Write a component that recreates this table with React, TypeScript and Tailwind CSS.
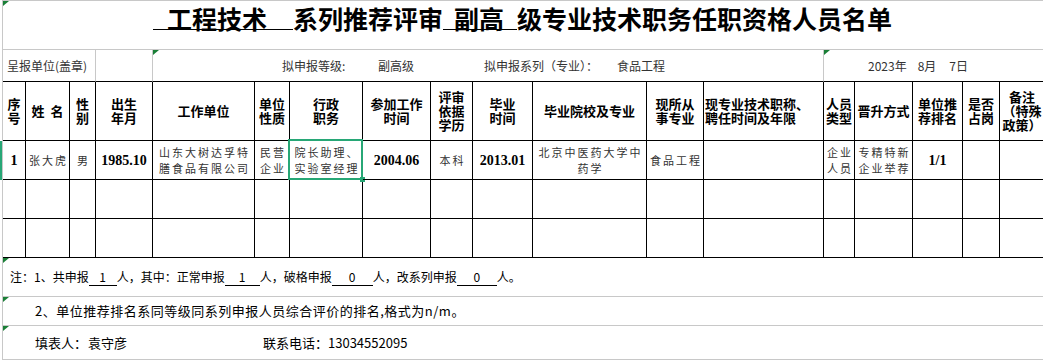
import React from "react";

const heads: string[][] = [
  ["序", "号"],
  ["姓 名"],
  ["性", "别"],
  ["出生", "年月"],
  ["工作单位"],
  ["单位", "性质"],
  ["行政", "职务"],
  ["参加工作", "时间"],
  ["评审", "依据", "学历"],
  ["毕业", "时间"],
  ["毕业院校及专业"],
  ["现所从", "事专业"],
  ["现专业技术职称、", "聘任时间及年限"],
  ["人员", "类型"],
  ["晋升方式"],
  ["单位推", "荐排名"],
  ["是否", "占岗"],
  ["备注", "（特殊", "政策）"],
];

// kind: "num" = bold serif digits, "txt" = body text
const row: { kind: "num" | "txt"; lines: string[] }[] = [
  { kind: "num", lines: ["1"] },
  { kind: "txt", lines: ["张大虎"] },
  { kind: "txt", lines: ["男"] },
  { kind: "num", lines: ["1985.10"] },
  { kind: "txt", lines: ["山东大树达孚特", "膳食品有限公司"] },
  { kind: "txt", lines: ["民营", "企业"] },
  { kind: "txt", lines: ["院长助理、", "实验室经理"] },
  { kind: "num", lines: ["2004.06"] },
  { kind: "txt", lines: ["本科"] },
  { kind: "num", lines: ["2013.01"] },
  { kind: "txt", lines: ["北京中医药大学中", "药学"] },
  { kind: "txt", lines: ["食品工程"] },
  { kind: "txt", lines: [] },
  { kind: "txt", lines: ["企业", "人员"] },
  { kind: "txt", lines: ["专精特新", "企业举荐"] },
  { kind: "num", lines: ["1/1"] },
  { kind: "txt", lines: [] },
  { kind: "txt", lines: [] },
];

function Tri() {
  return (
    <span className="absolute left-0 top-0 h-0 w-0 border-t-[5px] border-r-[6px] border-t-[#1a7f37] border-r-transparent" />
  );
}

function Blank({ w, v }: { w: string; v: string }) {
  return <span className={`inline-block border-b border-black text-center leading-[16px] ${w}`}>{v}</span>;
}

export default function App() {
  return (
    <div className="flex h-[360px] w-[1043px] overflow-hidden bg-white text-black font-['Noto_Sans_CJK_SC',sans-serif]">
      {/* row header gutter */}
      <div className="flex w-[2px] shrink-0 flex-col">
        <div className="h-[141px]" />
        <div className="h-[39px] bg-[#27a776]" />
      </div>

      <div className="grid shrink-0 grid-cols-[23px_44px_26px_57px_102px_35px_73px_68px_42px_60px_114px_57px_120px_31px_58px_50px_37px_61px] content-start border-l border-t border-[#c8c8c8]">
        {/* title */}
        <div className="relative col-[1/-1] h-[49px] whitespace-nowrap border-b border-[#c8c8c8] pl-[150px] pt-[6px] text-[25px] font-bold leading-[22px]">
          <Tri />
          <span className="inline-block border-b border-black pl-[14px] pr-[26px]">工程技术</span>
          <span>系列推荐评审</span>
          <span className="inline-block border-b border-black pl-[11px] pr-[13px]">副高</span>
          <span>级专业技术职务任职资格人员名单</span>
        </div>

        {/* unit / level line */}
        <div className="col-span-3 flex h-[32px] items-center border-b border-r border-b-black border-r-[#c8c8c8] pl-[4px] text-[12px] text-[#333]">
          呈报单位(盖章)
        </div>
        <div className="h-[32px] border-b border-r border-b-black border-r-[#c8c8c8]" />
        <div className="relative col-span-9 flex h-[32px] items-center whitespace-nowrap border-b border-r border-b-black border-r-[#c8c8c8] pl-[129px] text-[12px] text-[#333]">
          <Tri />
          <span className="w-[96px]">拟申报等级:</span>
          <span className="w-[106px]">副高级</span>
          <span className="w-[133px]">拟申报系列（专业）：</span>
          <span>食品工程</span>
        </div>
        <div className="relative col-span-5 flex h-[32px] items-center whitespace-nowrap border-b border-black pl-[44px] text-[12px] text-[#333]">
          <Tri />
          <span>2023年</span>
          <span className="ml-[11px]">8月</span>
          <span className="ml-[13px]">7日</span>
        </div>

        {/* header */}
        {heads.map((h, i) => (
          <div
            key={"h" + i}
            className={`flex h-[59px] flex-col justify-center border-b border-r border-black text-[13px] font-bold leading-[14px] ${
              i === 12 ? "items-start pl-[1px]" : i === 17 ? "items-start" : "items-center text-center"
            }`}
          >
            {i === 1 ? (
              <div className="flex gap-[6px]">
                <span>姓</span>
                <span>名</span>
              </div>
            ) : i === 17 ? (
              <div className="flex w-[44px] flex-col items-center">
                {h.map((l) => (
                  <span key={l}>{l}</span>
                ))}
              </div>
            ) : (
              h.map((l) => (
                <span key={l} className="whitespace-nowrap">
                  {l}
                </span>
              ))
            )}
          </div>
        ))}

        {/* data row */}
        {row.map((c, i) => (
          <div
            key={"d" + i}
            className={`relative flex h-[39px] flex-col items-center justify-center whitespace-nowrap border-b border-r border-black text-center ${
              c.kind === "num"
                ? "font-['Liberation_Serif','Noto_Sans_CJK_SC',serif] text-[14px] font-bold"
                : "pl-[2px] text-[11px] leading-[16px] tracking-[2px] text-[#333]"
            }`}
          >
            {c.lines.map((l) => (
              <span key={l}>{l}</span>
            ))}
            {i === 6 && (
              <>
                <span className="pointer-events-none absolute -bottom-[1px] -left-[2px] -right-[1px] -top-[2px] border-2 border-[#27a776]" />
                <span className="absolute -bottom-[3px] -right-[3px] h-[5px] w-[5px] bg-[#27a776]" />
              </>
            )}
          </div>
        ))}

        {/* empty rows */}
        {Array.from({ length: 36 }).map((_, i) => (
          <div key={"e" + i} className="h-[39px] border-b border-r border-black" />
        ))}

        {/* notes */}
        <div className="relative col-[1/-1] flex h-[39px] items-center whitespace-nowrap border-b border-[#c8c8c8] pl-[7px] text-[12px]">
          <Tri />
          <span>注：1、共申报</span>
          <Blank w="w-[28px]" v="1" />
          <span>人，其中：正常申报</span>
          <Blank w="w-[35px]" v="1" />
          <span>人，破格申报</span>
          <Blank w="w-[41px]" v="0" />
          <span>人，改系列申报</span>
          <Blank w="w-[40px]" v="0" />
          <span>人。</span>
        </div>
        <div className="relative col-[1/-1] flex h-[29px] items-center whitespace-nowrap border-b border-[#c8c8c8] pl-[32px] text-[13px] tracking-[0.5px]">
          <Tri />
          2、单位推荐排名系同等级同系列申报人员综合评价的排名,格式为n/m。
        </div>
        <div className="relative col-[1/-1] flex h-[34px] items-center whitespace-nowrap border-b border-[#c8c8c8] pl-[32px] text-[13px]">
          <Tri />
          <span className="w-[53px]">填表人：</span>
          <span className="w-[175px]">袁守彦</span>
          <span>联系电话：13034552095</span>
        </div>
      </div>
    </div>
  );
}
